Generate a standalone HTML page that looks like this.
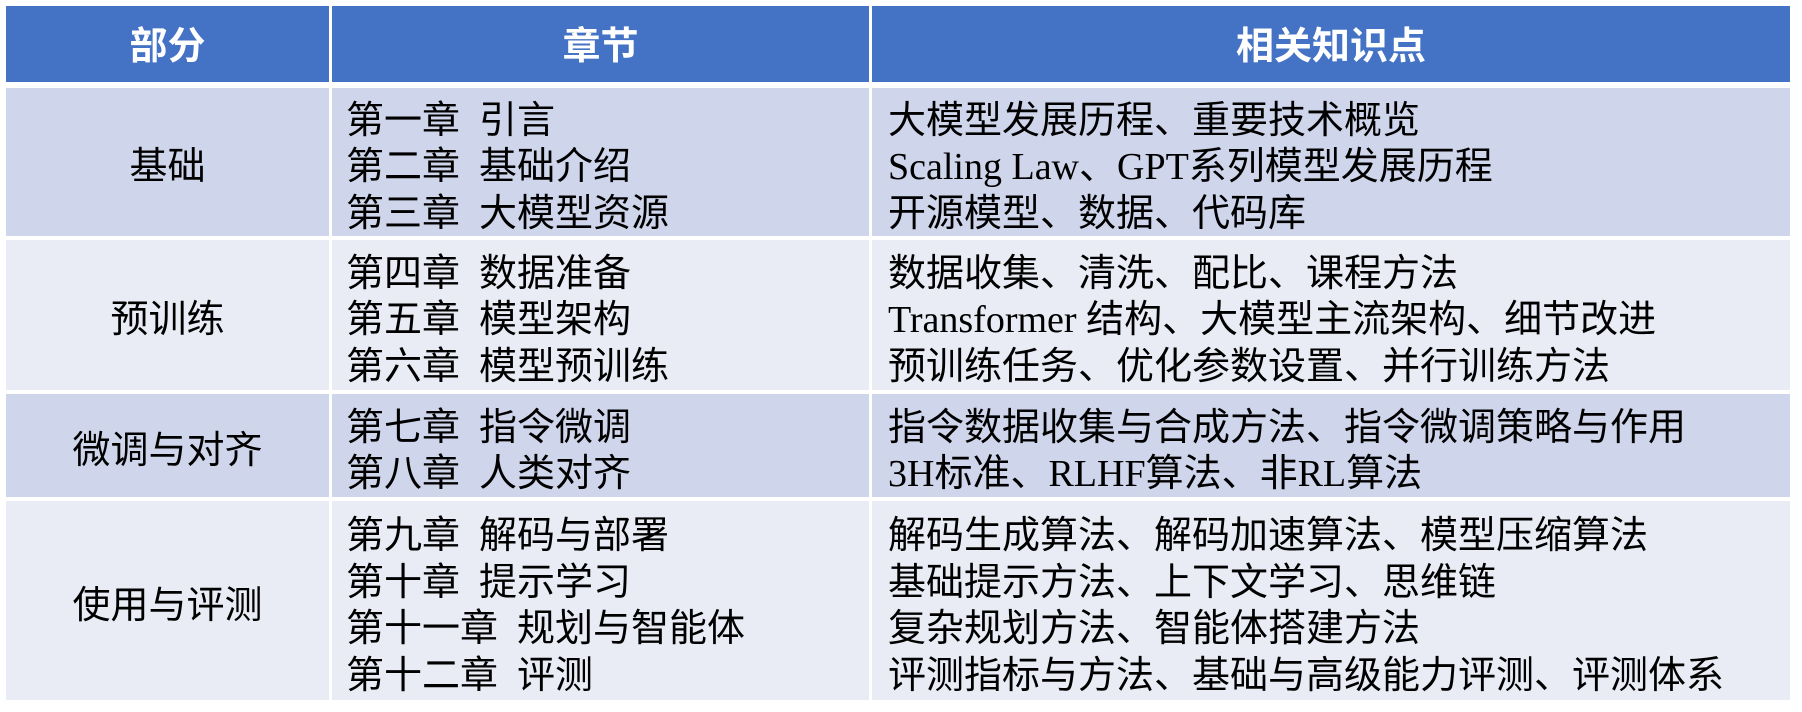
<!DOCTYPE html>
<html><head><meta charset="utf-8"><style>
body{margin:0;width:1802px;height:712px;background:#fff;position:relative;overflow:hidden;font-family:"Liberation Sans","Noto Sans CJK SC",sans-serif;}
.c{position:absolute;display:flex;flex-direction:column;justify-content:center;box-sizing:border-box;color:#000;font-size:38px;line-height:46.5px;padding-top:11px;}
.h{background:#4472C4;color:#fff;font-weight:bold;align-items:center;font-size:38px;padding-top:6px;}
.o{background:#CFD5EA;}
.e{background:#E9EBF5;}
.m{align-items:center;}
.l2{padding-left:14px;}
.l3{padding-left:16px;font-family:"Liberation Serif","Noto Sans CJK SC",serif;}
.l3 span,.l2 span{white-space:nowrap;}
.g{display:inline-block;width:19px;}
</style></head><body>
<div class="c h" style="left:6px;top:6px;width:323px;height:76px">部分</div>
<div class="c h" style="left:332px;top:6px;width:537px;height:76px">章节</div>
<div class="c h" style="left:872px;top:6px;width:918px;height:76px">相关知识点</div>

<div class="c o m" style="left:6px;top:88px;width:323px;height:148px">基础</div>
<div class="c o l2" style="left:332px;top:88px;width:537px;height:148px"><span>第一章<i class="g"></i>引言</span><span>第二章<i class="g"></i>基础介绍</span><span>第三章<i class="g"></i>大模型资源</span></div>
<div class="c o l3" style="left:872px;top:88px;width:918px;height:148px"><span>大模型发展历程、重要技术概览</span><span>Scaling Law、GPT系列模型发展历程</span><span>开源模型、数据、代码库</span></div>

<div class="c e m" style="left:6px;top:240px;width:323px;height:150px">预训练</div>
<div class="c e l2" style="left:332px;top:240px;width:537px;height:150px"><span>第四章<i class="g"></i>数据准备</span><span>第五章<i class="g"></i>模型架构</span><span>第六章<i class="g"></i>模型预训练</span></div>
<div class="c e l3" style="left:872px;top:240px;width:918px;height:150px"><span>数据收集、清洗、配比、课程方法</span><span>Transformer 结构、大模型主流架构、细节改进</span><span>预训练任务、优化参数设置、并行训练方法</span></div>

<div class="c o m" style="left:6px;top:394px;width:323px;height:103px">微调与对齐</div>
<div class="c o l2" style="left:332px;top:394px;width:537px;height:103px"><span>第七章<i class="g"></i>指令微调</span><span>第八章<i class="g"></i>人类对齐</span></div>
<div class="c o l3" style="left:872px;top:394px;width:918px;height:103px"><span>指令数据收集与合成方法、指令微调策略与作用</span><span>3H标准、RLHF算法、非RL算法</span></div>

<div class="c e m" style="left:6px;top:501px;width:323px;height:199px">使用与评测</div>
<div class="c e l2" style="left:332px;top:501px;width:537px;height:199px"><span>第九章<i class="g"></i>解码与部署</span><span>第十章<i class="g"></i>提示学习</span><span>第十一章<i class="g"></i>规划与智能体</span><span>第十二章<i class="g"></i>评测</span></div>
<div class="c e l3" style="left:872px;top:501px;width:918px;height:199px"><span>解码生成算法、解码加速算法、模型压缩算法</span><span>基础提示方法、上下文学习、思维链</span><span>复杂规划方法、智能体搭建方法</span><span>评测指标与方法、基础与高级能力评测、评测体系</span></div>
</body></html>
